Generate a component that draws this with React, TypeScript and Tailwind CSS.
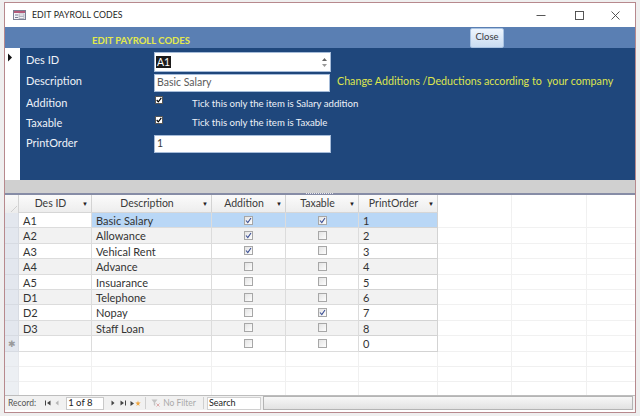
import React from "react";

const F = { fontFamily: "Lato, 'Liberation Sans', sans-serif" };

type Row = { id: string; desc: string; add: boolean; tax: boolean; order: string; isNew?: boolean };

const rows: Row[] = [
  { id: "A1", desc: "Basic Salary", add: true, tax: true, order: "1" },
  { id: "A2", desc: "Allowance", add: true, tax: false, order: "2" },
  { id: "A3", desc: "Vehical Rent", add: true, tax: false, order: "3" },
  { id: "A4", desc: "Advance", add: false, tax: false, order: "4" },
  { id: "A5", desc: "Insuarance", add: false, tax: false, order: "5" },
  { id: "D1", desc: "Telephone", add: false, tax: false, order: "6" },
  { id: "D2", desc: "Nopay", add: false, tax: true, order: "7" },
  { id: "D3", desc: "Staff Loan", add: false, tax: false, order: "8" },
  { id: "", desc: "", add: false, tax: false, order: "0", isNew: true },
];

function GridCheck({ checked }: { checked: boolean }) {
  return (
    <div className="w-[9px] h-[9px] border border-[#a7a7a7] bg-gradient-to-br from-[#e4e4e4] to-[#fdfdfd] flex items-center justify-center">
      {checked && (
        <svg width="7" height="7" viewBox="0 0 7 7">
          <path d="M1 3.5 L2.8 5.6 L6 1" stroke="#3b4f95" strokeWidth="1.1" fill="none" />
        </svg>
      )}
    </div>
  );
}

function FormCheck() {
  return (
    <div className="w-[8px] h-[8px] bg-white border border-[#555] flex items-center justify-center">
      <svg width="6" height="6" viewBox="0 0 6 6">
        <path d="M0.7 3 L2.3 4.8 L5.3 0.9" stroke="#000" strokeWidth="1.2" fill="none" />
      </svg>
    </div>
  );
}

function HeaderCell({ w, label }: { w: string; label: string }) {
  return (
    <div className={`${w} h-full border-r border-[#d3d3d3] flex items-center relative`}>
      <span className="flex-1 text-center text-[10.5px] text-[#3a3a3a] pl-[3px]">{label}</span>
      <span className="w-[12px] text-[6px] text-[#222] text-center">▼</span>
    </div>
  );
}

export default function App() {
  return (
    <div className="w-[640px] h-[416px] bg-[#efefef] pt-[2px] pl-[4px] pr-[4px] pb-[3px]" style={F}>
      <div className="h-full border border-[#b7898d] bg-white flex flex-col">
        {/* Title bar */}
        <div className="h-[24px] flex items-center shrink-0">
          <div className="ml-[8px] w-[13px] h-[10px]">
            <svg width="13" height="10" viewBox="0 0 13 10">
              <rect x="0.5" y="0.5" width="12" height="9" fill="#f4f4f8" stroke="#7b7f93" />
              <rect x="1" y="1" width="11" height="2" fill="#b45a7a" />
              <rect x="2" y="4.5" width="3" height="1" fill="#7b7f93" />
              <rect x="6" y="4" width="5" height="2" fill="#fff" stroke="#8a8ea0" strokeWidth="0.6" />
              <rect x="2" y="7" width="3" height="1" fill="#7b7f93" />
              <rect x="6" y="6.8" width="5" height="1.6" fill="#fff" stroke="#8a8ea0" strokeWidth="0.6" />
            </svg>
          </div>
          <span className="ml-[6px] text-[8.7px] text-[#1e1e1e] tracking-[0.1px]">EDIT PAYROLL CODES</span>
          <div className="flex-1" />
          <div className="w-[36px] flex justify-center">
            <svg width="10" height="10" viewBox="0 0 10 10"><path d="M0.5 5.5 H9.5" stroke="#444" strokeWidth="0.9" /></svg>
          </div>
          <div className="w-[36px] flex justify-center ml-[2px]">
            <svg width="9" height="9" viewBox="0 0 9 9"><rect x="0.5" y="0.5" width="8" height="8" fill="none" stroke="#444" strokeWidth="0.9" /></svg>
          </div>
          <div className="w-[36px] flex justify-center mr-[2px]">
            <svg width="9" height="9" viewBox="0 0 9 9"><path d="M0.5 0.5 L8.5 8.5 M8.5 0.5 L0.5 8.5" stroke="#444" strokeWidth="0.9" /></svg>
          </div>
        </div>

        {/* Header band */}
        <div className="h-[21px] bg-[#5a7fb3] flex items-center shrink-0">
          <div className="w-[465px] pl-[87px]">
            <span className="text-[9.5px] font-bold text-[#e4ea4c]">EDIT PAYROLL CODES</span>
          </div>
          <button className="w-[34px] h-[20px] rounded-[2px] border border-[#a9c3e2] bg-gradient-to-b from-[#eef5fd] to-[#c9dcf2] text-[9.5px] text-[#3a3a3a] flex items-center justify-center">
            Close
          </button>
        </div>

        {/* Form */}
        <div className="h-[132px] flex shrink-0">
          <div className="w-[15px] bg-white pt-[5px] pl-[2px]">
            <svg width="6" height="9" viewBox="0 0 6 9"><path d="M1 0.5 L5 4.5 L1 8.5 Z" fill="#111" /></svg>
          </div>
          <div className="flex-1 bg-[#1f477c] pt-[4px] pl-[6px] flex flex-col text-[#eef2f8]">
            <div className="h-[20px] flex items-center">
              <span className="w-[128px] text-[11px] -mt-[3px]">Des ID</span>
              <div className="w-[177px] h-[20px] bg-white border border-[#a6bcd9] flex items-center">
                <span className="ml-[1px] bg-[#1b1b1b] text-white text-[10.5px] leading-[12px] px-[1px]">A1</span>
                <div className="flex-1" />
                <div className="w-[9px] h-full flex flex-col items-center justify-center gap-[3px] mr-[1px]">
                  <svg width="5" height="3" viewBox="0 0 5 3"><path d="M0 3 L2.5 0 L5 3 Z" fill="#666" /></svg>
                  <svg width="5" height="3" viewBox="0 0 5 3"><path d="M0 0 L2.5 3 L5 0 Z" fill="#999" /></svg>
                </div>
              </div>
            </div>
            <div className="h-[18px] mt-[2px] flex items-center">
              <span className="w-[128px] text-[11px] -mt-[3px]">Description</span>
              <div className="w-[176px] h-[18px] bg-white border border-[#a6bcd9] flex items-center">
                <span className="ml-[2px] text-[10.5px] text-[#5a5a5a]">Basic Salary</span>
              </div>
              <span className="ml-[7px] text-[10.7px] text-[#dde54e] -mt-[3px]">Change Additions /Deductions according to&nbsp; your company</span>
            </div>
            <div className="h-[20px] mt-[1px] flex items-center">
              <span className="w-[129px] text-[11px]">Addition</span>
              <div className="-mt-[7px]"><FormCheck /></div>
              <span className="ml-[29px] text-[9.6px] mt-[2px]">Tick this only the item is Salary addition</span>
            </div>
            <div className="h-[20px] flex items-center">
              <span className="w-[129px] text-[11px]">Taxable</span>
              <div className="-mt-[7px]"><FormCheck /></div>
              <span className="ml-[29px] text-[9.6px]">Tick this only the item is Taxable</span>
            </div>
            <div className="h-[18px] mt-[2px] flex items-center">
              <span className="w-[128px] text-[11px] -mt-[1px]">PrintOrder</span>
              <div className="w-[177px] h-[18px] bg-white border border-[#a6bcd9] flex items-center">
                <span className="ml-[2px] text-[10.5px] text-[#3a3a3a]">1</span>
              </div>
            </div>
          </div>
        </div>

        {/* Gray band + splitter */}
        <div className="h-[13px] bg-[#d0d0d0] shrink-0" />
        <div className="h-[2px] bg-[#868ca6] shrink-0 flex">
          <div className="ml-[301px] w-[27px] h-[2px] border-t border-dotted border-[#e8e8f0]" />
        </div>

        {/* Grid header */}
        <div className="h-[18px] flex shrink-0 bg-white">
          <div className="w-[14px] h-full bg-gradient-to-b from-[#f9f9f9] to-[#ececec] border-r border-[#d3d3d3] flex items-end justify-end">
            <svg width="8" height="8" viewBox="0 0 8 8"><path d="M7 1 L1 7" stroke="#cfcfcf" strokeWidth="1" /></svg>
          </div>
          <div className="flex h-full bg-gradient-to-b from-[#fbfbfb] to-[#ededed] border-b border-[#d6d6d6]">
            <HeaderCell w="w-[73px]" label="Des ID" />
            <HeaderCell w="w-[120px]" label="Description" />
            <HeaderCell w="w-[74px]" label="Addition" />
            <HeaderCell w="w-[73px]" label="Taxable" />
            <HeaderCell w="w-[79px]" label="PrintOrder" />
          </div>
          <div className="w-[74px] h-full border-r border-[#f0f0f0]" />
          <div className="w-[75px] h-full border-r border-[#f0f0f0]" />
          <div className="flex-1" />
        </div>

        {/* Grid body */}
        <div className="h-[182px] overflow-hidden shrink-0 flex flex-col text-[11px] text-[#333]">
          {rows.map((r, i) => {
            const sel = i === 0;
            const bg = sel ? "bg-[#b9d7f6]" : i % 2 === 1 ? "bg-[#f2f2f2]" : "bg-white";
            return (
              <div key={i} className="h-[15.4px] shrink-0 flex">
                <div className="w-[14px] h-full bg-[#e3e7ee] border-r border-b border-[#d7dbe2] flex items-center justify-center">
                  {r.isNew && <span className="text-[9px] text-[#9a9a9a] leading-none">✱</span>}
                </div>
                <div className={`w-[73px] h-full border-r border-b border-[#dcdcdc] flex items-center pl-[4px] pt-[2px] ${sel ? "bg-white" : bg}`}>{r.id}</div>
                <div className={`w-[120px] h-full border-r border-b border-[#dcdcdc] flex items-center pl-[4px] pt-[2px] ${bg}`}>{r.desc}</div>
                <div className={`w-[74px] h-full border-r border-b border-[#dcdcdc] flex items-center justify-center ${bg}`}><GridCheck checked={r.add} /></div>
                <div className={`w-[73px] h-full border-r border-b border-[#dcdcdc] flex items-center justify-center ${bg}`}><GridCheck checked={r.tax} /></div>
                <div className={`w-[79px] h-full border-r border-b border-[#d3d3d3] flex items-center pl-[4px] pt-[2px] ${bg}`}>{r.order}</div>
                <div className="w-[74px] h-full border-r border-b border-[#f1f1f1]" />
                <div className="w-[75px] h-full border-r border-b border-[#f1f1f1]" />
                <div className="flex-1 h-full border-b border-[#f1f1f1]" />
              </div>
            );
          })}
          {[0, 1, 2].map((k) => (
            <div key={`e${k}`} className="h-[15.4px] shrink-0 flex">
              <div className="w-[14px] h-full bg-[#eceff3] border-r border-b border-[#e6e8ec]" />
              <div className="w-[73px] h-full border-r border-b border-[#f0f0f0]" />
              <div className="w-[120px] h-full border-r border-b border-[#f0f0f0]" />
              <div className="w-[74px] h-full border-r border-b border-[#f0f0f0]" />
              <div className="w-[73px] h-full border-r border-b border-[#f0f0f0]" />
              <div className="w-[79px] h-full border-r border-b border-[#f0f0f0]" />
              <div className="w-[74px] h-full border-r border-b border-[#f0f0f0]" />
              <div className="w-[75px] h-full border-r border-b border-[#f0f0f0]" />
              <div className="flex-1 h-full border-b border-[#f0f0f0]" />
            </div>
          ))}
        </div>

        {/* Navigation bar */}
        <div className="h-[15px] shrink-0 flex items-center bg-[#f1f1f1] border-t border-[#bdbdbd] text-[8.5px] text-[#555]">
          <span className="ml-[3px]">Record:</span>
          <svg className="ml-[9px]" width="6" height="6" viewBox="0 0 6 6"><rect x="0" y="0.5" width="1" height="5" fill="#444" /><path d="M5.5 0.5 L2 3 L5.5 5.5 Z" fill="#444" /></svg>
          <svg className="ml-[4px]" width="4" height="6" viewBox="0 0 4 6"><path d="M3.5 0.5 L0.5 3 L3.5 5.5 Z" fill="#b5b5b5" /></svg>
          <div className="ml-[7px] w-[38px] h-[13px] bg-white border border-[#c9c9c9] flex items-center pl-[1px] text-[9.5px] text-[#222]">1 of 8</div>
          <svg className="ml-[7px]" width="4" height="6" viewBox="0 0 4 6"><path d="M0.5 0.5 L3.5 3 L0.5 5.5 Z" fill="#444" /></svg>
          <svg className="ml-[5px]" width="6" height="6" viewBox="0 0 6 6"><path d="M0.5 0.5 L4 3 L0.5 5.5 Z" fill="#444" /><rect x="5" y="0.5" width="1" height="5" fill="#444" /></svg>
          <svg className="ml-[4px]" width="11" height="7" viewBox="0 0 11 7"><path d="M0.5 1 L4 3.5 L0.5 6 Z" fill="#444" /><path d="M8 0.5 L8.6 2.6 L10.7 2.6 L9 3.9 L9.6 6 L8 4.7 L6.4 6 L7 3.9 L5.3 2.6 L7.4 2.6 Z" fill="#f0a43c" /></svg>
          <div className="ml-[4px] w-px h-[12px] bg-[#cfcfcf]" />
          <svg className="ml-[5px]" width="9" height="8" viewBox="0 0 9 8"><path d="M0.5 0.5 H6.5 L4.2 3.5 V7 L2.8 6 V3.5 Z" fill="#c4c4c4" /><path d="M5.5 4.5 L8.5 7.5 M8.5 4.5 L5.5 7.5" stroke="#d89a9a" strokeWidth="0.8" /></svg>
          <span className="ml-[3px] text-[#aaaaaa]">No Filter</span>
          <div className="ml-[7px] w-px h-[12px] bg-[#cfcfcf]" />
          <div className="ml-[3px] w-[54px] h-[13px] bg-white border border-[#d0d0d0] flex items-center pl-[1px] text-[9px] text-[#222]">Search</div>
          <div className="ml-[2px] flex-1 h-[14px] mr-[2px] border border-[#b4b4b4] bg-gradient-to-b from-[#f7f7f7] to-[#e2e2e2]" />
        </div>
        <div className="flex-1 bg-white" />
      </div>
    </div>
  );
}
